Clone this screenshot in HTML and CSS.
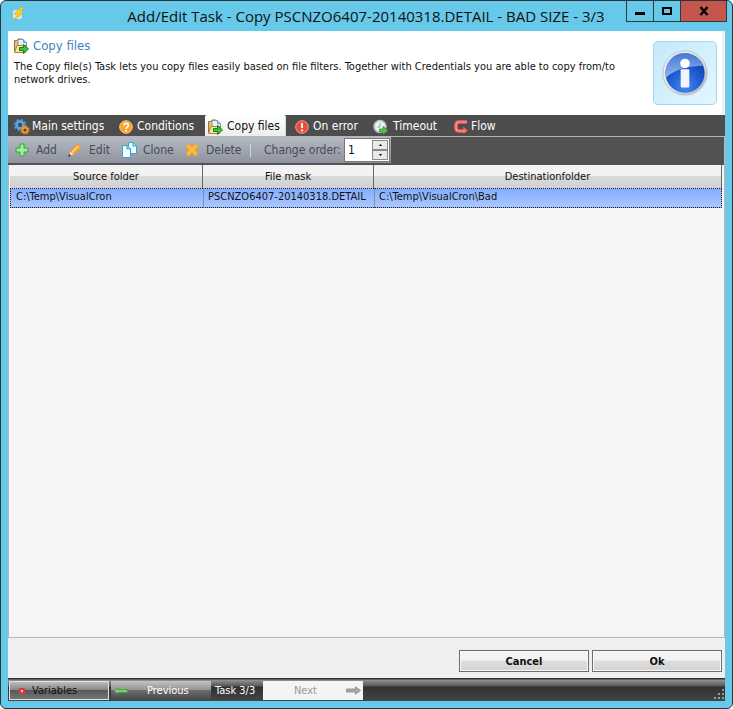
FILE: index.html
```html
<!DOCTYPE html>
<html lang="en">
<head>
<meta charset="utf-8">
<title>Add/Edit Task</title>
<link rel="stylesheet" href="styles.css">
</head>
<body>
<svg class="defs" width="0" height="0" aria-hidden="true">
  <defs>
    <radialGradient id="orb" cx=".5" cy=".85" r=".75"><stop offset="0" stop-color="#3f8bf0"/><stop offset=".5" stop-color="#2260d6"/><stop offset="1" stop-color="#123fae"/></radialGradient>
    <linearGradient id="ring" x1="0" y1="0" x2="1" y2="1"><stop offset="0" stop-color="#ffffff"/><stop offset=".5" stop-color="#e2e4e8"/><stop offset="1" stop-color="#a9adb4"/></linearGradient>
    <linearGradient id="glow" x1="0" y1="0" x2="0" y2="1"><stop offset="0" stop-color="#4f83dc"/><stop offset="1" stop-color="#a5c6f5"/></linearGradient>
    <symbol id="copyfiles" viewBox="0 0 16 16">
      <path d="M1.500 2.500H4l1-1.500h4v12.500H1.500z" fill="#e8c25c" stroke="#8f7636"/>
      <path d="M5 1.500h5.500l3 3v6H5z" fill="#e6f1fb" stroke="#7f97b2"/>
      <path d="M10.500 1.500v3h3" fill="#b9cbe0" stroke="#7f97b2"/>
      <path d="M1.500 14.500 4 7.500h9.500l-1 7z" fill="#f7e3a0" stroke="#a58746"/>
      <path d="M6.500 9.500h4v-3l5 4.500-5 4.500v-3h-4z" fill="#3fc332" stroke="#1f7a20"/>
    </symbol>
  </defs>
</svg>
<div class="window">
  <header class="titlebar">
    <svg class="app-icon" width="14" height="16" viewBox="0 0 14 16"><rect x="1" y="4" width="9" height="9" rx="2" fill="#d8e8e4"/><path d="M9.500 1 2 8l4 .5L1.500 14 11 7.500 7.500 7 12 1.500z" fill="#ffd51c" stroke="#dba51c" stroke-width=".7"/></svg>
    <h1 class="title">Add/Edit Task - Copy PSCNZO6407-20140318.DETAIL - BAD SIZE - 3/3</h1>
    <div class="caption">
      <button class="cap" aria-label="Minimize"><svg width="10" height="10" viewBox="0 0 10 10"><path d="M0 6h10v3H0z"/></svg></button>
      <button class="cap" aria-label="Maximize"><svg width="10" height="10" viewBox="0 0 10 10"><path d="M1 2h8v6H1z" fill="none" stroke="#000" stroke-width="2"/></svg></button>
      <button class="cap close" aria-label="Close"><svg width="10" height="10" viewBox="0 0 10 10"><path d="M1.500 1 8.500 9M8.500 1 1.500 9" stroke="#000" stroke-width="2.400"/></svg></button>
    </div>
  </header>
  <main class="content">
    <section class="intro">
      <div class="intro-text">
        <h2 class="heading"><svg width="16" height="16"><use href="#copyfiles"/></svg>Copy files</h2>
        <p class="description">The Copy file(s) Task lets you copy files easily based on file filters. Together with Credentials you are able to copy from/to network drives.</p>
      </div>
      <div class="info">
        <svg width="46" height="46" viewBox="0 0 48 48"><circle cx="24" cy="24" r="23" fill="url(#ring)" stroke="#b9bec6" stroke-width="1"/><circle cx="24" cy="24" r="20.500" fill="url(#orb)"/><path d="M4 27a20 20 0 0 1 38.500-10.500C31 17 14 19 4 29z" fill="url(#glow)" opacity=".85"/><circle cx="24" cy="14" r="5" fill="#fff"/><rect x="19.500" y="20" width="9" height="19" rx="1" fill="#f3f5fa"/></svg>
      </div>
    </section>
    <nav class="tabs">
      <button class="tab tab-main"><svg width="16" height="16" viewBox="0 0 16 16"><circle cx="6" cy="6" r="3.500" fill="none" stroke="#58a8e6" stroke-width="2.600"/><circle cx="6" cy="6" r="5.300" fill="none" stroke="#4d9cdf" stroke-width="1.800" stroke-dasharray="2.200 1.960"/><circle cx="11" cy="11" r="2.600" fill="#4a4a4a" stroke="#f09a2c" stroke-width="2"/><circle cx="11" cy="11" r="4" fill="none" stroke="#e88718" stroke-width="1.600" stroke-dasharray="1.600 1.540"/></svg>Main settings</button>
      <button class="tab tab-conditions"><svg width="14" height="14" viewBox="0 0 14 14"><circle cx="7" cy="7" r="6.300" fill="#fba429" stroke="#ffc878"/><path d="M4.800 5.500c0-3 4.600-2.700 4.600 0 0 1.700-2.300 1.500-2.300 3.400M7.100 10v1.500" fill="none" stroke="#fff" stroke-width="1.600"/></svg>Conditions</button>
      <button class="tab tab-copy active"><svg width="16" height="16"><use href="#copyfiles"/></svg>Copy files</button>
      <button class="tab tab-error"><svg width="14" height="14" viewBox="0 0 14 14"><circle cx="7" cy="7" r="6.300" fill="#e94d40" stroke="#ff9c92"/><path d="M7 3v5M7 9.500v1.800" stroke="#fff" stroke-width="1.800"/></svg>On error</button>
      <button class="tab tab-timeout"><svg width="16" height="16" viewBox="0 0 16 16"><circle cx="7" cy="7.500" r="5.800" fill="#f0f5f8" stroke="#b9c6cc" stroke-width="1.800"/><path d="M7 4v4H4" fill="none" stroke="#8aa2b8"/><path d="M6.500 10h3.500V7.500l5 4-5 4V13H6.500z" fill="#62b853" stroke="#3a8f34" stroke-width=".8"/></svg>Timeout</button>
      <button class="tab tab-flow"><svg width="14" height="14" viewBox="0 0 14 14"><path d="M13 2H5Q2 2 2 5v3q0 3 3 3h5" fill="none" stroke="#f76061" stroke-width="3.600"/><path d="M9 6.500 14 10.500 9.500 14z" fill="#f76061"/><path d="M13 2H5Q2 2 2 5v3q0 3 3 3h6" fill="none" stroke="#ff9897" stroke-width="1.200"/></svg>Flow</button>
    </nav>
    <div class="toolstrip">
      <div class="toolbar">
        <button class="tool tool-add"><svg width="14" height="14" viewBox="0 0 14 14"><path d="M5 1h4v4h4v4H9v4H5V9H1V5h4z" fill="#a4eb9c" stroke="#28aa35"/></svg>Add</button>
        <button class="tool tool-edit"><svg width="14" height="14" viewBox="0 0 14 14"><path d="M1 13 2.500 8.500 9.500 1l3.500 3.500-7.500 7z" fill="#ffae2f" stroke="#e9871f" stroke-width=".8"/><path d="M1 13 2.500 8.500l3 3z" fill="#f8dfbe"/><path d="m0 14 1.200-3 1.800 1.800z" fill="#333"/><path d="m4 9 6-6" stroke="#ffd77b" stroke-width="1.300"/></svg>Edit</button>
        <button class="tool tool-clone"><svg width="15" height="16" viewBox="0 0 15 16"><path d="M6.500.500h5l3 3v8h-8z" fill="#eefbff" stroke="#31a7ce"/><path d="M11 .5v3.500h3.500" fill="#9fdfed" stroke="#31a7ce"/><path d="M.5 3.500h5l3 3v9h-8z" fill="#f4fdff" stroke="#31a7ce"/><path d="M5 3.500V7h3.500" fill="#9fdfed" stroke="#31a7ce"/></svg>Clone</button>
        <button class="tool tool-delete"><svg width="14" height="14" viewBox="0 0 14 14"><path d="M3.500.700 7 4.200 10.500.700 13.300 3.500 9.800 7l3.500 3.500-2.800 2.800L7 9.800l-3.500 3.500L.7 10.500 4.200 7 .7 3.500z" fill="#ffbc3c" stroke="#f6942a"/></svg>Delete</button>
        <label class="order-label" for="order">Change order:</label>
        <div class="spinner">
          <input id="order" class="order" type="text" value="1">
          <div class="steps"><button class="step" aria-label="Increase"><svg width="3" height="2"><path d="M0 2 1.500 0 3 2z"/></svg></button><button class="step" aria-label="Decrease"><svg width="3" height="2"><path d="M0 0h3L1.500 2z"/></svg></button></div>
        </div>
      </div>
    </div>
    <section class="list">
      <table class="grid">
        <colgroup><col class="col-source"><col class="col-mask"><col></colgroup>
        <thead><tr><th>Source folder</th><th>File mask</th><th>Destinationfolder</th></tr></thead>
        <tbody><tr><td>C:\Temp\VisualCron</td><td>PSCNZO6407-20140318.DETAIL</td><td>C:\Temp\VisualCron\Bad</td></tr></tbody>
      </table>
    </section>
    <div class="actions"><button class="action">Cancel</button><button class="action">Ok</button></div>
    <footer class="status">
      <button class="nav variables"><svg width="6" height="6"><rect width="6" height="6" rx="1" fill="#e0383b"/><rect x="2" y="2" width="2" height="2" fill="#ffc0b8"/></svg>Variables</button>
      <button class="nav previous"><svg width="14" height="8" viewBox="0 0 14 8"><path d="M0 4 4 1v1.500h9.500v3H4V7z" fill="#7cca74" stroke="#3f9a40" stroke-width=".7"/></svg><span>Previous</span></button>
      <span class="counter">Task 3/3</span>
      <button class="nav next" disabled><span>Next</span><svg width="15" height="9" viewBox="0 0 15 9"><path d="M.5 3h9V.800l5 3.700-5 3.700V6h-9z" fill="#aaa" stroke="#888" stroke-width=".8"/></svg></button>
      <svg class="grip" width="11" height="11" viewBox="0 0 11 11"><path d="M8 0h2v2H8zM4 4h2v2H4zM8 4h2v2H8zM0 8h2v2H0zM4 8h2v2H4zM8 8h2v2H8z" fill="#999"/></svg>
    </footer>
  </main>
</div>
</body>
</html>
```
FILE: styles.css
```css
* { box-sizing: border-box; }
body {
  margin: 0;
  background: #fff;
  color: #111;
  font: 11px/13px "DejaVu Sans Condensed", "DejaVu Sans", sans-serif;
}
button, input { font: inherit; color: inherit; margin: 0; padding: 0; border: 0; background: none; border-radius: 0; }
svg { display: block; flex: none; }
.defs { position: absolute; }
.window {
  display: flex;
  flex-direction: column;
  height: 100vh;
  padding: 0 7px 7px;
  background: #66c9e9;
  border: 1px solid #2b3538;
  border-radius: 6px;
}
.titlebar { display: flex; height: 30px; flex: none; margin-right: -2px; }
.app-icon { margin: 5px 0 0 4px; }
.title {
  flex: 1;
  margin: 0;
  padding-left: 80px;
  text-align: center;
  font: 15px/30px "Open Sans", "Noto Sans", sans-serif;
  white-space: nowrap;
}
.caption { display: flex; height: 21px; border: 1px solid #2d3b41; border-top: 0; }
.cap { display: grid; place-items: center; width: 27px; border-right: 1px solid #2d3b41; }
.cap.close { width: 45px; border: 0; background: #c4564e; }
.content { display: flex; flex-direction: column; flex: 1; min-height: 0; background: #efefef; }
.intro { display: flex; justify-content: space-between; height: 84px; flex: none; padding: 6px 5px 0 5px; background: #fff; border-right: 3px solid #f0f0f0; }
.intro-text { max-width: 624px; }
.heading { display: flex; align-items: center; gap: 4px; margin: 0 0 6px; color: #3f82bd; font-size: 13px; font-weight: 400; line-height: 17px; }
.description { margin: 0 0 0 1px; }
.info {
  display: grid;
  place-items: center;
  width: 64px;
  height: 64px;
  margin-top: 4px;
  flex: none;
  border: 1px solid #a5d7ee;
  border-radius: 5px;
  background: linear-gradient(135deg, #c4e9fa, #e2f7ff);
}
.tabs { display: flex; height: 22px; flex: none; padding-left: 4px; background: #4d4d4d; border-bottom: 1px solid #b5b5b5; font-size: 12px; }
.tab { display: flex; align-items: center; gap: 3px; height: 21px; padding: 2px 2px 0; color: #fff; white-space: nowrap; }
.tab-main { width: 105px; gap: 2px; }
.tab-conditions { width: 88px; gap: 4px; }
.tab-copy { width: 81px; gap: 4px; }
.tab-error { width: 80px; gap: 4px; padding-left: 9px; margin-right: 5px; }
.tab-timeout { width: 80px; gap: 4px; }
.tab-flow { padding-left: 3px; }
.tab.active { color: #111; background: linear-gradient(#fff, #ededed); border-right: 1px solid #c5e4e4; border-radius: 2px 2px 0 0; }
.toolstrip { display: flex; height: 28px; flex: none; background: #525252; border-right: 1px solid #bbb; }
.toolbar { display: flex; height: 26px; padding: 0 1px 0 5px; background: linear-gradient(#b6bac4, #8d939e); color: #484b52; font-size: 12px; }
.tool { display: flex; align-items: center; gap: 7px; padding: 0 2px; text-align: left; white-space: nowrap; }
.tool-add { width: 53px; }
.tool-edit { width: 54px; }
.tool-clone { width: 63px; gap: 6px; }
.tool-delete { width: 67px; }
.order-label { align-self: center; padding-left: 13px; width: 94px; border-left: 1px solid #cfd2d7; white-space: nowrap; }
.spinner { display: flex; width: 46px; height: 24px; margin-top: 1px; padding: 1px; border: 1px solid #777; background: #fff; color: #111; }
.order { width: 26px; padding-left: 2px; }
.steps { display: flex; flex-direction: column; justify-content: space-between; flex: 1; }
.step { display: grid; place-items: center; height: 10px; background: #e9e9e9; border: 1px solid #8a8a8a; }
.list { flex: 1; min-height: 0; padding: 0 2px 0 1px; background: #f5f5f5; border: solid #b7b7b7; border-width: 0 1px 1px; }
.grid { width: 100%; table-layout: fixed; border-collapse: separate; border-spacing: 0; }
.col-source { width: 193px; }
.col-mask { width: 171px; }
.grid th { height: 23px; padding: 0; font-weight: 400; background: linear-gradient(#f3f3f3 45%, #dadada 50%, #d1d1d1); border-right: 1px solid #666; }
.grid td { height: 20px; padding: 0 5px 4px; white-space: nowrap; background: linear-gradient(#84adff, #aac7ff); border: dotted #222; border-width: 1px 0; }
.grid td + td { border-left: 1px solid #8190ad; padding-left: 4px; }
.grid td:first-child { border-left: 1px dotted #222; }
.grid td:last-child { border-right: 1px dotted #222; }
.actions { display: flex; justify-content: flex-end; gap: 3px; padding: 12px 3px 6px; flex: none; }
.action { width: 130px; height: 22px; border: 1px solid #6e6e6e; box-shadow: inset 0 0 0 1px #f8f8f8; background: linear-gradient(#f4f4f4 45%, #dedede 50%, #d2d2d2); font-weight: 700; }
.status { display: flex; position: relative; height: 23px; flex: none; padding: 3px 1px 1px; background: linear-gradient(#303030 1px, #929292 2px, #575757 8px, #303030 9px, #454545); color: #fff; }
.nav { display: flex; align-items: center; width: 100px; height: 19px; }
.variables { gap: 7px; padding-left: 9px; color: #111; border: 1px solid #e1e1e1; background: linear-gradient(#bcbcbc, #888 45%, #5a5a5a 50%, #757575); }
.previous { margin-left: 2px; padding-left: 3px; gap: 19px; background: linear-gradient(#c4c4c4, #969696 45%, #6c6c6c 50%, #484848); }
.counter { align-self: center; width: 52px; padding-left: 4px; white-space: nowrap; }
.next { justify-content: flex-end; padding-right: 2px; gap: 29px; background: #f4f4f4; color: #999; }
.grip { position: absolute; right: 0; bottom: 1px; }
```
